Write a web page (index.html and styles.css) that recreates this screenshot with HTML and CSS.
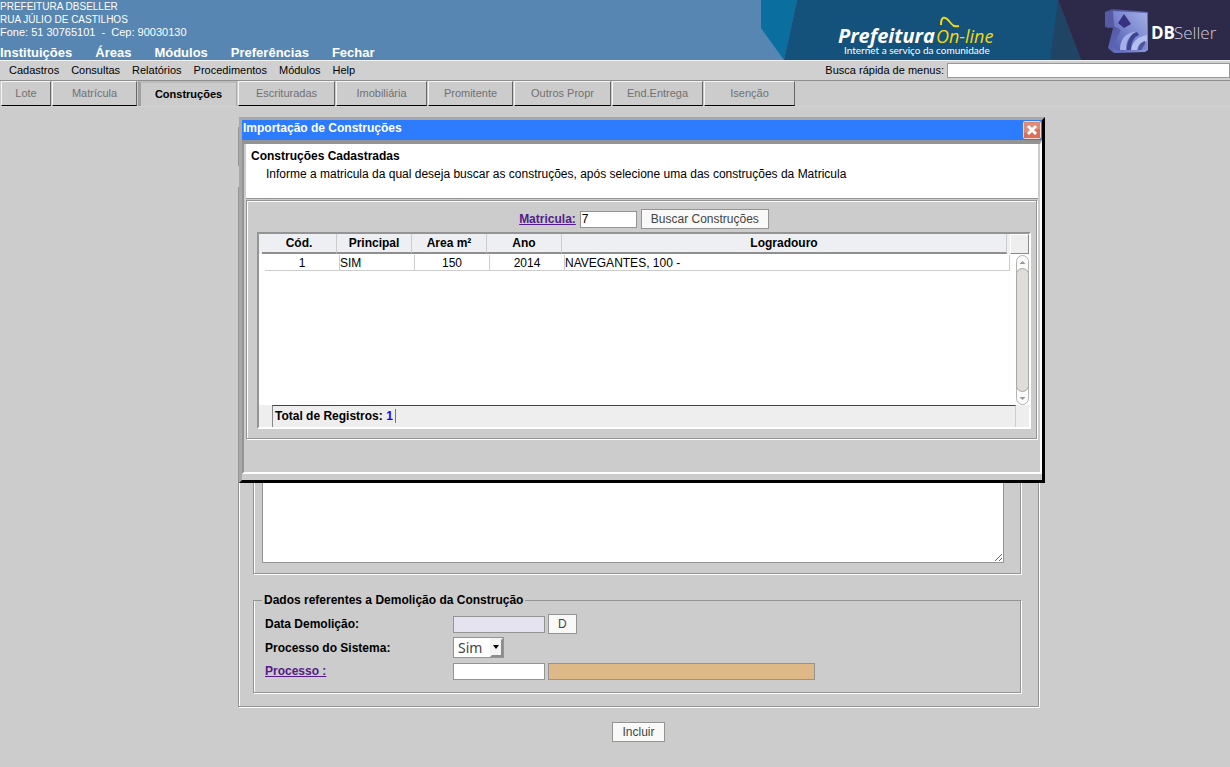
FILE: index.html
```
<!DOCTYPE html>
<html lang="pt-BR">
<head>
<meta charset="utf-8">
<title>Cadastro de Construções</title>
<link rel="stylesheet" href="styles.css">
</head>
<body>
<header class="top">
  <div class="top-info">
    <address class="org">
      <span>PREFEITURA DBSELLER</span>
      <span>RUA JÚLIO DE CASTILHOS</span>
      <span class="phone">Fone: 51 30765101&nbsp; -&nbsp; Cep: 90030130</span>
    </address>
    <nav class="main-nav">
      <a href="#">Instituições</a><a href="#">Áreas</a><a href="#">Módulos</a><a href="#">Preferências</a><a href="#">Fechar</a>
    </nav>
  </div>
  <svg class="banner" width="469" height="60" viewBox="0 0 469 60" role="img" aria-label="Prefeitura On-line, DBSeller">
    <defs>
      <linearGradient id="cube" x1="0" y1="0" x2="1" y2="1"><stop offset="0" stop-color="#4b4c92"/><stop offset=".5" stop-color="#5a63b4"/><stop offset="1" stop-color="#8f9ade"/></linearGradient>
      <linearGradient id="face" x1="0" y1="1" x2="1" y2="0"><stop offset="0" stop-color="#5058ac"/><stop offset=".5" stop-color="#7c88d0"/><stop offset="1" stop-color="#a3b0e4"/></linearGradient>
    </defs>
    <path d="M0 0H36L23 60L0 28Z" fill="#0a6f9f"/>
    <path d="M36 0H297L320 60H23Z" fill="#14527c"/>
    <path d="M297 0L320 60H289Z" fill="#204464"/>
    <path d="M297 0H469V60H320Z" fill="#2c2a48"/>
    <text class="logo-bold" x="77" y="43">Prefeitura</text>
    <text class="logo-thin" x="175" y="43">On-line</text>
    <path d="M180 25C180 16 184 16 188 21S193 27 198 26" fill="none" stroke="#f2d80c" stroke-width="2"/>
    <text class="logo-sub" x="83" y="54">Internet a serviço da comunidade</text>
    <path d="M344 12L351 9L387 12V50L384 52L353 53L347 48L352 28L344 27Z" fill="url(#cube)"/>
    <path d="M352 11L386 13V49L357 51L352 46L360 30L353 26Z" fill="url(#face)"/>
    <path d="M344 12L352 11V26L347 28L344 26Z" fill="#575aa5"/>
    <path d="M363 14L370 24L363 28L357 23Z" fill="#383080"/>
    <path d="M359 50C359 39 365 33 373 32L376 33C368 35 365 41 365 50Z" fill="#a5b2ea"/>
    <path d="M366 50C366 40 370 33 376 32L378 35C373 37 370 42 370 50Z" fill="#3d4590"/>
    <path d="M370 50C371 43 375 37 386 35V41C379 42 377 45 376 50Z" fill="#b3bff0"/>
    <path d="M377 50C378 45 380 42 384 41V44L380 50Z" fill="#4e559f"/>
    <text class="brand-bold" x="390" y="39">DB</text>
    <text class="brand-thin" x="413" y="39">Seller</text>
  </svg>
</header>

<div class="menubar">
  <nav class="menu">
    <a href="#">Cadastros</a><a href="#">Consultas</a><a href="#">Relatórios</a><a href="#">Procedimentos</a><a href="#">Módulos</a><a href="#">Help</a>
  </nav>
  <label for="busca">Busca rápida de menus:</label>
  <input id="busca" class="quick" type="text">
</div>

<nav class="tabs">
  <button type="button" class="tab w-48">Lote</button>
  <button type="button" class="tab w-84">Matrícula</button>
  <button type="button" class="tab active">Construções</button>
  <button type="button" class="tab w-96">Escrituradas</button>
  <button type="button" class="tab w-90">Imobiliária</button>
  <button type="button" class="tab w-84">Promitente</button>
  <button type="button" class="tab w-96">Outros Propr</button>
  <button type="button" class="tab w-90">End.Entrega</button>
  <button type="button" class="tab w-90">Isenção</button>
</nav>

<main class="page">
  <form class="form">
    <fieldset class="box intro"></fieldset>
    <fieldset class="box outer">
      <fieldset class="box notes">
        <textarea class="obs" aria-label="Observações"></textarea>
      </fieldset>
      <fieldset class="box demo">
        <legend>Dados referentes a Demolição da Construção</legend>
        <div class="fields">
          <label for="data">Data Demolição:</label>
          <div class="controls"><input id="data" class="field date" type="text"><button type="button" class="btn">D</button></div>
          <label for="sistema">Processo do Sistema:</label>
          <div class="controls tall"><span class="pick"><select id="sistema"><option>Sim</option><option>Não</option></select><svg width="13" height="19" viewBox="0 0 13 19" aria-hidden="true"><path d="M0 0H13V19H0Z" fill="#f4f4f2"/><path d="M0 19L2 17H11V2L13 0V19Z" fill="#8c8c8c"/><path d="M3 7H9L6 11Z" fill="#000"/></svg></span></div>
          <label for="processo"><a href="#">Processo :</a></label>
          <div class="controls"><input id="processo" class="field" type="text"><input class="field name" type="text" readonly aria-label="Nome do processo"></div>
        </div>
      </fieldset>
    </fieldset>
    <button type="button" class="btn submit">Incluir</button>

    <section class="dialog" role="dialog" aria-labelledby="dlg-title">
      <div class="title-bar">
        <h2 id="dlg-title">Importação de Construções</h2>
        <button type="button" class="close" aria-label="Fechar janela"><svg width="18" height="18" viewBox="0 0 18 18"><rect x=".5" y=".5" width="17" height="17" rx="1" fill="#d9705a" stroke="#f3d9d2"/><path d="M1 1H17V8L1 12Z" fill="#e39a88" opacity=".6"/><path d="M5 5L13 13M13 5L5 13" stroke="#fff" stroke-width="3"/></svg></button>
      </div>
      <div class="dialog-body">
        <div class="message">
          <h3>Construções Cadastradas</h3>
          <p>Informe a matricula da qual deseja buscar as construções, após selecione uma das construções da Matricula</p>
        </div>
        <fieldset class="box search">
          <div class="query">
            <label for="matricula"><a href="#">Matricula:</a></label>
            <input id="matricula" class="field num" type="text" value="7">
            <button type="button" class="btn">Buscar Construções</button>
          </div>
          <div class="grid">
            <div class="grid-head">
              <table>
                <colgroup><col class="c"><col class="c"><col class="c"><col class="c"><col></colgroup>
                <thead><tr><th>Cód.</th><th>Principal</th><th>Area m²</th><th>Ano</th><th>Logradouro</th></tr></thead>
              </table>
              <button type="button" class="cols" aria-label="Colunas"></button>
            </div>
            <div class="grid-rows">
              <table>
                <colgroup><col class="c"><col class="c"><col class="c"><col class="c"><col></colgroup>
                <tbody><tr><td>1</td><td class="txt">SIM</td><td>150</td><td>2014</td><td class="txt">NAVEGANTES, 100 -</td></tr></tbody>
              </table>
              <svg class="scroll" width="13" height="150" viewBox="0 0 13 150" aria-hidden="true">
                <rect x=".5" y=".5" width="12" height="149" rx="6" fill="#fafafa" stroke="#b4b2ae"/>
                <rect x=".5" y="13.500" width="12" height="123" rx="6" fill="#deddda" stroke="#a9a7a2"/>
                <path d="M3.500 9H9.500L6.500 6Z M3.500 142H9.500L6.500 145Z" fill="#999"/>
              </svg>
            </div>
            <div class="grid-foot"><div class="total"><span>Total de Registros: <b>1</b></span></div></div>
          </div>
        </fieldset>
      </div>
    </section>
  </form>
</main>
</body>
</html>
```
FILE: styles.css
```
* { box-sizing: border-box; }
body {
  margin: 0;
  min-height: 100vh;
  background: #ccc;
  color: #000;
  font: 12px/14px "Liberation Sans", Arial, sans-serif;
  overflow-x: hidden;
}
h2, h3, p { margin: 0; font-size: inherit; }
button, input, select, textarea { font: inherit; margin: 0; border-radius: 0; }

.top { display: flex; justify-content: space-between; height: 60px; background: #5786b2; color: #fff; }
.org { display: flex; flex-direction: column; font: 10px/13px "Liberation Sans", Arial, sans-serif; }
.phone { font-size: 11px; }
.main-nav { display: flex; gap: 23px; margin-top: 6px; font-weight: bold; font-size: 13px; line-height: 15px; }
.main-nav a { color: #fff; text-decoration: none; }
.banner { display: block; flex: none; }
.logo-bold { font: italic bold 20px "Open Sans", sans-serif; fill: #fff; }
.logo-thin { font: italic 18px "Open Sans", sans-serif; fill: #f2d80c; }
.logo-sub { font: 10px Lato, sans-serif; fill: #fff; }
.brand-bold { font: bold 17px "Open Sans", sans-serif; fill: #fff; }
.brand-thin { font: 300 17px "Open Sans", sans-serif; fill: #cfcddd; }

.menubar {
  display: flex;
  align-items: center;
  height: 21px;
  padding-bottom: 1px;
  background: #d0d0d0;
  border-top: 1px solid #f2f2f2;
  border-bottom: 1px solid #909090;
  font-size: 11px;
}
.menu { display: flex; gap: 12px; margin: 0 auto 0 9px; }
.menu a { color: #000; text-decoration: none; }
.quick { width: 283px; height: 15px; margin-left: 3px; border: 1px solid #999; background: #fff; }

.tabs { display: flex; gap: 1px; height: 26px; padding: 0 0 1px 1px; border-bottom: 1px solid #d2d2d2; }
.tab {
  height: 25px;
  padding: 0 0 2px;
  background: #ccc;
  color: #707070;
  font-size: 11px;
  border: 1px solid;
  border-color: #f4f4f4 #666 #000 #f4f4f4;
}
.w-48 { width: 50px; }
.w-84 { width: 85px; }
.w-90 { width: 91px; }
.w-96 { width: 97px; }
.tab.active {
  width: 99px;
  color: #000;
  font-weight: bold;
  border-width: 2px 1px 0 3px;
  border-color: #bbb #aaa #ccc #a0a0a0;
}

.page { display: flex; justify-content: center; padding: 20px 0 24px 47px; }
.form { position: relative; display: flex; flex-direction: column; align-items: center; width: 801px; }
.box {
  margin: 0;
  padding: 0;
  min-width: 0;
  border: 1px solid #949494;
  box-shadow: 1px 1px 0 #fff, inset 1px 1px 0 #fff;
}
.intro { width: 100%; height: 39px; }
.outer { width: 100%; margin-top: 21px; padding: 0 17px 13px 14px; }
.notes { height: 386px; padding: 8px 8px 10px; display: flex; border-top: 0; }
.obs { width: 742px; height: 100%; border: 1px solid #949494; background: #fff; resize: both; }
.demo { margin-top: 19px; padding-bottom: 10px; box-shadow: 1px 1px 0 #fff, inset 1px 0 0 #fff; }
legend { margin-left: 8px; padding: 0 2px; font-weight: bold; }
.fields { display: grid; grid-template-columns: 188px 1fr; padding: 6px 11px 0; align-items: center; font-weight: bold; }
.controls { display: flex; align-items: center; gap: 3px; height: 22px; }
.controls.tall { height: 25px; }
.field { width: 92px; height: 17px; padding: 0 1px; border: 1px solid #949494; background: #fff; }
.date { background: #e6e3f1; }
.name { width: 267px; background: #deb887; }
.btn { height: 20px; padding: 0 9px; border: 1px solid #949494; background: #f9f9f7; color: #444; font-size: 12px; font-weight: normal; }
.pick { display: flex; align-items: center; width: 51px; height: 21px; border: 1px solid #949494; background: #fff; }
.pick select { appearance: none; flex: 1; width: 36px; height: 19px; padding: 0 0 0 4px; border: 0; background: #fff; color: #444; font: 14px/18px "Noto Sans", sans-serif; }
label a { color: #551a8b; font-weight: bold; }
.submit { margin-top: 15px; }

.dialog {
  position: absolute;
  top: -10px;
  left: 1px;
  width: 806px;
  border: 3px solid;
  border-color: #a8a8a8 #000 #000 #a8a8a8;
  background: #ccc;
  padding-bottom: 6px;
}
.title-bar { display: flex; justify-content: space-between; height: 20px; padding: 0 1px; background: #2d7bff; color: #fff; line-height: 16px; }
.close { width: 18px; height: 18px; margin-top: 1px; padding: 0; border: 0; background: none; }
.close svg { display: block; }
.dialog-body { height: 334px; padding: 0 2px; border: 2px solid; border-color: #949494 #fff #fff #949494; border-top-width: 4px; }
.message { height: 55px; padding: 5px; background: #fff; border-bottom: 1px solid #949494; }
.message p { margin: 4px 0 0 15px; }
.search { height: 239px; margin: 1px 1px 0 0; padding: 8px 5px 0 10px; }
.query { display: flex; justify-content: center; align-items: center; gap: 4px; height: 20px; margin-bottom: 3px; }
.num { width: 57px; }
.grid { border: 2px solid; border-color: #949494 #fff #fff #949494; background: #fff; }
table { border-collapse: separate; border-spacing: 0; table-layout: fixed; flex: 1; width: 0; }
.c { width: 75px; }
th, td { padding: 0; text-align: center; border-right: 1px solid #ccc; }
.grid-head { display: flex; height: 20px; padding-left: 3px; background: #eeeff2; }
.grid-head th { height: 20px; border-bottom: 2px solid #8f8f8f; }
.cols { width: 19px; margin: 0 0 0 3px; padding: 0; border: 1px solid; border-color: #fff #888 #888 #fff; background: #eee; }
.grid-rows { display: flex; align-items: flex-start; height: 151px; padding: 1px 0 0 6px; }
.grid-rows td { height: 16px; border-bottom: 1px solid #ccc; }
.grid-rows .txt { text-align: left; }
.scroll { display: block; flex: none; margin-left: 6px; }
.grid-foot { height: 22px; padding: 0 13px; background: #eee; }
.total { height: 22px; padding: 3px 2px; border-top: 1px solid #444; border-left: 1px solid #888; border-right: 1px solid #ccc; font-weight: bold; }
.total span { display: inline-block; padding-right: 2px; border-right: 1px solid #777; }
.total b { color: #2200ff; }
```
